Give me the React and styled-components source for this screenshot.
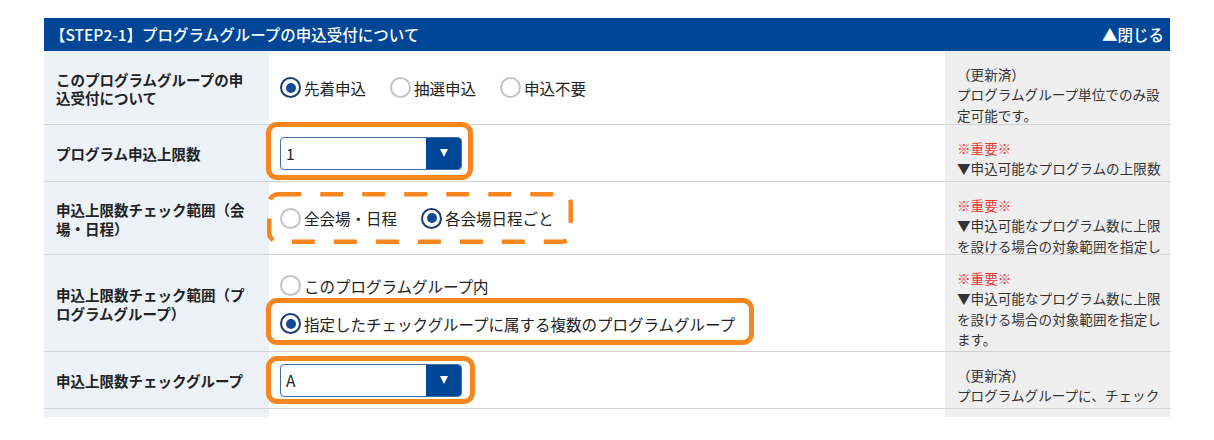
import React from 'react';
import styled, { createGlobalStyle } from 'styled-components';

const GlobalStyle = createGlobalStyle`
  body {
    margin: 0;
    background: #fff;
    font-family: "Noto Sans CJK JP", "Noto Sans", sans-serif;
  }
`

const Wrapper = styled.div`
  padding: 18px 0 0 44px;
`

const Panel = styled.div`
  width: 1126px;
`

const Header = styled.div`
  height: 33px;
  background: #004697;
  color: #fff;
  display: flex;
  align-items: center;
  justify-content: space-between;
  padding: 0 6px;
  font-size: 15.5px;
  font-weight: 500;
  line-height: 33px;
`

const Row = styled.div`
  display: grid;
  grid-template-columns: 225px 676px 225px;
  height: ${p => p.h}px;
  box-sizing: border-box;
  border-bottom: ${p => (p.last ? 'none' : '1px solid #d3d3d3')};
`

const Label = styled.div`
  background: #edf2f9;
  display: flex;
  align-items: center;
  padding: 3px 18px 0 12px;
  font-size: 14.5px;
  font-weight: 700;
  line-height: 18.5px;
  color: #222;
`

const Content = styled.div`
  background: #fff;
  display: flex;
  align-items: center;
  padding-left: 11px;
`

const Notes = styled.div`
  background: #efefef;
  padding: 13px 6px 0 12px;
  overflow: hidden;
  font-size: 13.6px;
  line-height: 20.3px;
  color: #333;
`

const Important = styled.span`
  color: #f53535;
`

const RadioGroup = styled.div`
  display: flex;
  align-items: center;
  gap: 24px;
`

const RadioStack = styled.div`
  display: flex;
  flex-direction: column;
  align-items: flex-start;
  gap: 16px;
  padding-top: 3px;
`

const RadioItem = styled.label`
  display: inline-flex;
  align-items: center;
  gap: 3px;
  font-size: 15.5px;
  line-height: 22px;
  color: #222;
`

const RadioMark = styled.span`
  width: 21px;
  height: 21px;
  box-sizing: border-box;
  border-radius: 50%;
  border: ${p => (p.checked ? '2.5px solid #1b3c72' : '2px solid #c4c4c4')};
  background: #fff;
  display: flex;
  align-items: center;
  justify-content: center;

  &::after {
    content: '';
    width: 10px;
    height: 10px;
    border-radius: 50%;
    background: #134a97;
    display: ${p => (p.checked ? 'block' : 'none')};
  }
`

const Select = styled.div`
  width: 182px;
  height: 33px;
  box-sizing: border-box;
  border: 1px solid #3f6eaa;
  border-radius: 4px;
  display: flex;
  overflow: hidden;
  background: #fff;
`

const SelectValue = styled.span`
  flex: 1;
  padding-left: 5px;
  font-size: 15.5px;
  line-height: 31px;
  color: #222;
`

const SelectArrow = styled.span`
  width: 35px;
  background: #004697;
  display: flex;
  align-items: center;
  justify-content: center;

  &::after {
    content: '';
    border-left: 4px solid transparent;
    border-right: 4px solid transparent;
    border-top: 8px solid #fff;
  }
`

/* orange annotation ring drawn over the control */
const Highlight = styled.span`
  position: relative;
  display: inline-flex;

  &::before {
    content: '';
    position: absolute;
    inset: -${p => p.t}px -${p => p.r}px -${p => p.b}px -${p => p.l}px;
    border: 5px solid #f7861f;
    border-radius: 11px;
    pointer-events: none;
  }
`

const Dashed = styled.span`
  position: relative;
  display: inline-flex;
`

const DashSvg = styled.svg`
  position: absolute;
  left: -13px;
  top: -15px;
  pointer-events: none;
`

const Radio = ({ checked, children }) => (
  <RadioItem>
    <RadioMark checked={checked} />
    {children}
  </RadioItem>
)

const Dropdown = ({ value }) => (
  <Select>
    <SelectValue>{value}</SelectValue>
    <SelectArrow />
  </Select>
)

export default function App() {
  return (
    <Wrapper>
      <GlobalStyle />
      <Panel>
        <Header>
          <span>【STEP2-1】プログラムグループの申込受付について</span>
          <span>▲閉じる</span>
        </Header>

        <Row h={74}>
          <Label>このプログラムグループの申込受付について</Label>
          <Content>
            <RadioGroup>
              <Radio checked>先着申込</Radio>
              <Radio>抽選申込</Radio>
              <Radio>申込不要</Radio>
            </RadioGroup>
          </Content>
          <Notes>
            （更新済）<br />
            プログラムグループ単位でのみ設定可能です。
          </Notes>
        </Row>

        <Row h={57}>
          <Label>プログラム申込上限数</Label>
          <Content>
            <Highlight t={15} r={11} b={10} l={14}>
              <Dropdown value="1" />
            </Highlight>
          </Content>
          <Notes>
            <Important>※重要※</Important><br />
            ▼申込可能なプログラムの上限数を設定します。
          </Notes>
        </Row>

        <Row h={73}>
          <Label>申込上限数チェック範囲（会場・日程）</Label>
          <Content>
            <Dashed>
              <DashSvg width="306" height="52" viewBox="0 0 306 52">
                <rect
                  x="2.25"
                  y="2.25"
                  width="301.5"
                  height="47.5"
                  rx="9"
                  fill="none"
                  stroke="#f7861f"
                  strokeWidth="4.5"
                  strokeDasharray="23 19"
                />
              </DashSvg>
              <RadioGroup>
                <Radio>全会場・日程</Radio>
                <Radio checked>各会場日程ごと</Radio>
              </RadioGroup>
            </Dashed>
          </Content>
          <Notes>
            <Important>※重要※</Important><br />
            ▼申込可能なプログラム数に上限を設ける場合の対象範囲を指定します。
          </Notes>
        </Row>

        <Row h={97}>
          <Label>申込上限数チェック範囲（プログラムグループ）</Label>
          <Content>
            <RadioStack>
              <Radio>このプログラムグループ内</Radio>
              <Highlight t={15} r={19} b={10} l={14}>
                <Radio checked>指定したチェックグループに属する複数のプログラムグループ</Radio>
              </Highlight>
            </RadioStack>
          </Content>
          <Notes>
            <Important>※重要※</Important><br />
            ▼申込可能なプログラム数に上限を設ける場合の対象範囲を指定します。
          </Notes>
        </Row>

        <Row h={57}>
          <Label>申込上限数チェックグループ</Label>
          <Content>
            <Highlight t={8} r={13} b={7} l={14}>
              <Dropdown value="A" />
            </Highlight>
          </Content>
          <Notes>
            （更新済）<br />
            プログラムグループに、チェックグループを設定します。
          </Notes>
        </Row>

        <Row h={8} last>
          <Label />
          <Content />
          <Notes />
        </Row>
      </Panel>
    </Wrapper>
  )
}
